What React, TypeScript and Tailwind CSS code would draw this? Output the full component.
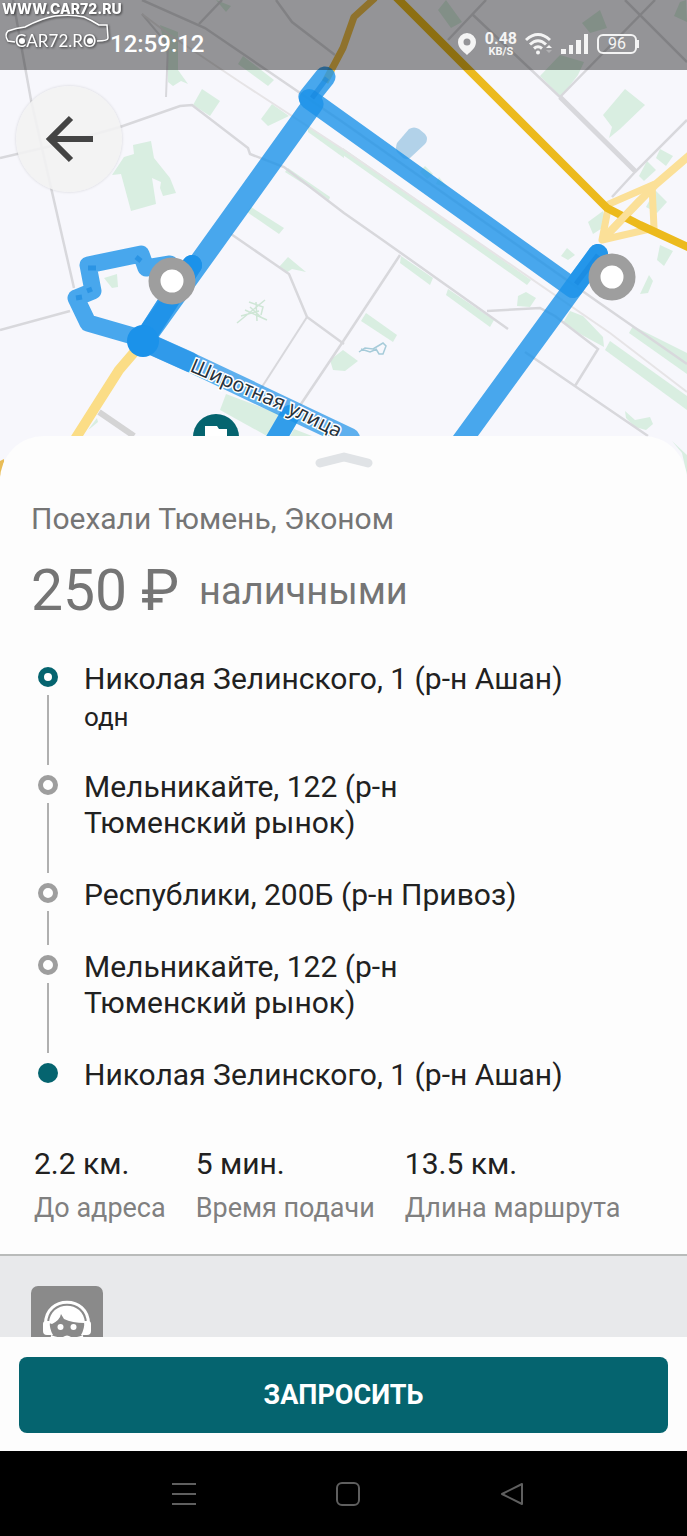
interface Stop {
  lines: string[];
  note?: string;
  kind: "start" | "middle" | "end";
}

const stops: Stop[] = [
  { lines: ["Николая Зелинского, 1 (р-н Ашан)"], note: "одн", kind: "start" },
  { lines: ["Мельникайте, 122 (р-н", "Тюменский рынок)"], kind: "middle" },
  { lines: ["Республики, 200Б (р-н Привоз)"], kind: "middle" },
  { lines: ["Мельникайте, 122 (р-н", "Тюменский рынок)"], kind: "middle" },
  { lines: ["Николая Зелинского, 1 (р-н Ашан)"], kind: "end" },
];

const stats = [
  { value: "2.2 км.", label: "До адреса" },
  { value: "5 мин.", label: "Время подачи" },
  { value: "13.5 км.", label: "Длина маршрута" },
];

const dotStyles = {
  start: "border-[6px] border-[#05646f] bg-white",
  middle: "border-[5px] border-[#9e9e9e] bg-white",
  end: "bg-[#05646f]",
};

function MapView() {
  return (
    <svg
      className="absolute inset-0 h-full w-full"
      viewBox="0 0 687 480"
      preserveAspectRatio="xMidYMin slice"
      aria-hidden="true"
    >
      <rect width="687" height="480" fill="#f7f7fc" />

      {/* parks */}
      <g fill="#d9eee1">
        <path d="M133 145L151 141L154 158L166 173L170 178L176 193L163 196L160 188L161 182L152 178L156 204L131 211L121 174L112 175L124 157L134 154Z" />
        <path d="M160 25L178 32L178 70L188 84L181 81L173 86L168 82L168 60Z" />
        <path d="M202 89L220 101L210 116L193 105Z" />
        <path d="M272 104L289 116L268 126L261 119Z" />
        <path d="M243 56L274 80L268 86L238 64Z" />
        <path d="M251 207L284 228L279 234L247 212Z" />
        <path d="M288 168L330 197L329 200L285 172Z" />
        <path d="M308 126L344 150L344 158L308 132Z" />
        <path d="M343 148L473 239L531 280L527 285L343 155Z" />
        <path d="M104 278L117 274L118 287L112 288Z" />
        <path d="M288 257L306 272L292 269L286 273L279 267Z" />
        <path d="M226 394L279 414L267 436L220 410Z" />
        <path d="M88 430L97 418L98 422L92 427Z" />
        <path d="M294 429L312 436L290 436Z" />
        <path d="M366 313L397 335L393 342L361 321Z" />
        <path d="M330 360L343 350L358 361L345 371L333 370Z" />
        <path d="M401 256L433 278L430 285L400 263Z" />
        <path d="M448 289L494 320L490 327L446 295Z" />
        <path d="M526 292L536 298L530 307L517 306L518 296Z" />
        <path d="M570 311L583 316L603 337L604 347L582 335L563 323Z" />
        <path d="M610 341L687 396L687 410L605 350Z" />
        <path d="M633 326L687 353L687 374L629 333Z" />
        <path d="M567 248L575 255L568 260L561 256Z" />
        <path d="M660 245L673 251L664 266L657 260Z" />
        <path d="M649 275L653 281L648 293L640 294Z" />
        <path d="M625 411L635 420L650 417L653 424L646 430L635 427L626 418Z" />
        <path d="M560 55L584 62L578 75L561 97L540 76Z" />
        <path d="M625 89L645 105L620 129L609 138L612 127L603 115Z" />
        <path d="M660 149L673 156L666 166L656 158Z" />
        <path d="M647 161L656 170L644 181L639 176Z" />
        <path d="M588 222L603 211L607 225L593 234Z" />
        <path d="M655 190L667 202L657 213L646 207Z" />
        <path d="M446 0L462 22L451 28L438 10Z" />
        <path d="M600 10L607 28L590 33L582 23Z" />
        <path d="M686 0L687 22L674 16L680 2Z" />
        <path d="M425 166L433 174L427 179L420 172Z" />
        <path d="M439 177L448 188L436 184Z" />
        <path d="M672 441L687 455L687 475L682 453Z" />
        <path d="M216 0L231 6L226 12Z" />
      </g>
      <path d="M397 143L409 129Q414 126 419 129L425 134Q429 139 425 144L410 158Q407 160 403 158L397 152Q395 148 397 143Z" fill="#b2d2e9" />
      <g fill="none" stroke="#cfe6d6" strokeWidth="1.5">
        <path d="M237 323L265 300M245 310L267 320M256 302L257 321M241 316L259 311M250 307L262 318M249 302L263 307L261 315" />
      </g>
      <path
        d="M359 352L365 348L373 349L378 346L383 343L386 346L383 354L379 354L376 349M361 349L370 352L377 349"
        fill="none"
        stroke="#a6cbd9"
        strokeWidth="1.5"
      />

      {/* minor streets */}
      <g fill="none" stroke="#d8d8dc" strokeWidth="2.5">
        <path d="M13 0L31 100L63 240L74 288" />
        <path d="M0 158L60 144L120 127L180 106L192 105L248 148L250 154L284 167L344 213L384 241L508 329" />
        <path d="M0 330L70 311" />
        <path d="M166 97L168 45L142 14" strokeWidth="2" />
        <path d="M142 0L205 28L344 123L598 302L687 364" />
        <path d="M142 14L170 35L240 82L344 150L610 333L687 392" stroke="#e6e4e6" strokeWidth="2" />
        <path d="M199 24L222 0M276 0L292 22L335 55" />
        <path d="M231 234L289 274L307 317L344 344" />
        <path d="M307 317L260 390" strokeWidth="2" />
        <path d="M400 255L344 340L297 410" />
        <path d="M487 311L540 308L555 316L598 349L575 386M525 352L648 436" />
        <path d="M486 0L448 40M472 14L560 97L635 171" />
        <path d="M560 97L655 0M625 0L687 62M687 120L635 172L612 197" />
        <path d="M99 412L134 436" stroke="#d4d4d5" strokeWidth="6" />
        <path d="M560 97L635 171" strokeWidth="5" />
      </g>

      {/* main roads */}
      <g fill="none" strokeLinejoin="round">
        <path d="M375 -2L354 17L343 48L325 82" stroke="#eebf4a" strokeWidth="7" />
        <path d="M143 342L119 370L91 414L72 444" stroke="#fbdd86" strokeWidth="10" />
        <g stroke="#fbe098">
          <path d="M690 155L655 185L602 240" strokeWidth="8" />
          <path d="M655 184L609 204L602 240L654 228L652 185" strokeWidth="7" />
        </g>
        <path d="M393 -6L607 208L640 225L690 248" stroke="#ecba1d" strokeWidth="8" />
        <path d="M640 200L602 240" stroke="#fbe098" strokeWidth="7" />
      </g>
      <path d="M0 461l4-2v8l-4 10z" fill="#e9bd58" />

      {/* ride route */}
      <g fill="none" stroke="#1c92e8" strokeWidth="20" strokeLinecap="round" strokeLinejoin="round">
        <path d="M325 77L309 97L313 104L143 341" strokeWidth="21" opacity="0.8" />
        <path d="M309 99L573 288L598 254" opacity="0.8" />
        <path d="M598 254L456 449" opacity="0.8" />
        <path
          d="M143 341L133 336L88 323L76 298L93 291L88 265L141 254L146 268L170 264"
          strokeWidth="17"
          opacity="0.8"
        />
        <path d="M192 265L143 341L194 364L350 438" opacity="0.7" />
        <path d="M190 362L143 341L192 265" opacity="0.7" />
        <path d="M290 415L272 446" opacity="0.9" />
      </g>
      <circle cx="143" cy="341" r="16" fill="#1b92ea" />
      <circle cx="192" cy="265" r="10" fill="#1b92ea" />
      <g fill="none" stroke="#1787dd" strokeWidth="5" opacity="0.6">
        <path d="M312 98L327 78M576 284L598 255" />
        <path d="M88 268h8M136 257l5 4M76 298l6-1M87 291l5-2" />
      </g>

      <path id="shirotnaya" d="M189 371L283 411L365 452" fill="none" />
      <text
        fill="#26323c"
        stroke="#ffffff"
        strokeWidth="3"
        paintOrder="stroke"
        className="font-['Noto_Sans',sans-serif] text-[20px]"
      >
        <textPath href="#shirotnaya">Широтная улица</textPath>
      </text>

      <circle cx="172" cy="281" r="17.5" fill="#fff" stroke="#9e9e9e" strokeWidth="12" />
      <circle cx="612" cy="277" r="17.5" fill="#fff" stroke="#9e9e9e" strokeWidth="12" />
      <circle cx="216" cy="437" r="23" fill="#05646f" />
      <path d="M205 426h12l2 3h8v16h-22z" fill="#fff" />
    </svg>
  );
}

function Watermark() {
  return (
    <svg className="absolute top-0 left-0 h-14 w-32" viewBox="0 0 128 56" role="img" aria-label="CAR72.RU">
      <g className="drop-shadow-[1px_1px_1px_rgba(0,0,0,0.6)]">
        <text x="2" y="14" fill="#fff" className="font-['Inter',sans-serif] text-[14px] leading-none font-extrabold">
          WWW.CAR72.RU
        </text>
        <path
          d="M15 42L8 41Q4 35 8 31Q16 28 25 27Q42 18 55 16Q72 14 84 17Q91 20 99 25L107 25L108 38Q108 41 97 41"
          fill="none"
          stroke="#fff"
          strokeWidth="1.5"
        />
        <text x="15" y="47" fill="#fff" className="font-['Lato',sans-serif] text-[17px]">
          CAR72.RO
        </text>
        <circle cx="22" cy="41" r="3" fill="#fff" />
        <circle cx="90" cy="41" r="3" fill="#fff" />
      </g>
    </svg>
  );
}

function StatusBar() {
  return (
    <div className="relative flex h-[70px] items-center justify-between bg-black/40 pt-[18px] pr-12 pl-[110px] text-[#f4f4f4]">
      <Watermark />
      <span className="text-2xl leading-6 font-medium text-white">12:59:12</span>
      <div className="flex items-center gap-2">
        <svg className="h-6 w-5" viewBox="0 0 20 24" fill="currentColor">
          <path fillRule="evenodd" d="M10 1a9 9 0 0 0-9 9c0 6 5 9 9 13c4-4 9-7 9-13a9 9 0 0 0-9-9zm0 5.5a3.500 3.500 0 1 1 0 7a3.500 3.500 0 0 1 0-7z" />
        </svg>
        <div className="flex flex-col items-center font-bold">
          <span className="text-base leading-[14px]">0.48</span>
          <span className="text-[11px] leading-[11px]">KB/S</span>
        </div>
        <svg className="h-6 w-7" viewBox="0 0 28 24" fill="none" stroke="currentColor" strokeWidth="3">
          <path d="M1 8Q13 -3 25 8M5 12.500Q13 5 21 12.500M9 16.500Q13 13 17 16.500" />
          <circle cx="13" cy="20.500" r="2" fill="currentColor" stroke="none" />
          <path d="M21 16l3-3 3 3z" fill="currentColor" stroke="none" />
          <path d="M21 18h6l-3 3z" fill="currentColor" stroke="none" opacity="0.3" />
        </svg>
        <svg className="h-5 w-7" viewBox="0 0 28 20" fill="currentColor">
          <path d="M0 15h5v5H0zM8 11h4v9H8zM15 6h5v14h-5zM23 0h4v20h-4z" />
        </svg>
        <div className="flex items-center">
          <span className="flex h-5 w-10 items-center justify-center rounded-md border-2 border-current text-base leading-none">
            96
          </span>
          <span className="h-2 w-0.5 bg-current" />
        </div>
      </div>
    </div>
  );
}

function RouteStop({ stop }: { stop: Stop }) {
  return (
    <li className="flex gap-[26px]">
      <div className="flex w-5 flex-col items-center pt-1.5">
        <span className={`h-5 w-5 shrink-0 rounded-full ${dotStyles[stop.kind]}`} />
        {stop.kind !== "end" && <span className="mt-2 mb-1 w-0.5 flex-1 bg-[#b0b0b0]" />}
      </div>
      <div className={stop.kind === "end" ? "" : "pb-9"}>
        {stop.lines.map((line) => (
          <p key={line} className="text-3xl leading-9">
            {line}
          </p>
        ))}
        {stop.note && <p className="pt-1 text-[26px] leading-8">{stop.note}</p>}
      </div>
    </li>
  );
}

function OperatorIcon() {
  return (
    <svg className="h-18 w-18" viewBox="0 0 72 72">
      <rect width="72" height="72" rx="7" fill="#8a8a8a" />
      <path d="M14.500 38C14.500 9 57.500 9 57.500 38" fill="none" stroke="#fff" strokeWidth="3" />
      <path d="M18 37C19 14 53 14 54 37Q41 37 33 33L30 28Q29 34 21 38Z" fill="#fff" />
      <path d="M12 38q0-3 3-3h4q-1 7 3 14h-6q-4 0-4-4zM60 38q0-3-3-3h-4q1 7-3 14h6q4 0 4-4z" fill="#fff" />
      <circle cx="29.500" cy="41" r="3" fill="#fff" />
      <circle cx="42.500" cy="41" r="3" fill="#fff" />
      <path d="M20 49Q27 52 32 51Q36 48 40 51Q46 52 52 49L54 72H18Z" fill="#fff" />
    </svg>
  );
}

export default function App() {
  return (
    <div className="flex min-h-screen flex-col bg-[#fdfdfd] font-['Roboto',sans-serif] text-[#212121]">
      <header className="relative h-[480px] shrink-0 overflow-hidden">
        <MapView />
        <StatusBar />
        <button
          type="button"
          aria-label="Назад"
          className="relative mt-4 ml-4 flex h-[106px] w-[106px] items-center justify-center rounded-full bg-[#f2f2f2]/90 shadow-[0_0_3px_rgba(0,0,0,0.15)]"
        >
          <svg className="h-12 w-12" viewBox="0 0 48 48" fill="none" stroke="#444" strokeWidth="6">
            <path d="M48 24H4M26 3L5 24L26 45" />
          </svg>
        </button>
      </header>

      <main className="relative -mt-11 flex flex-1 flex-col rounded-t-[44px] bg-[#fdfdfd]">
        <svg className="mt-4 h-4 w-[58px] self-center" viewBox="0 0 58 16" fill="none">
          <path d="M5 11L29 5L53 11" stroke="#e0e3e6" strokeWidth="9" strokeLinecap="round" strokeLinejoin="round" />
        </svg>

        <section className="px-[31px] pt-[33px] text-[#757575]">
          <h1 className="text-3xl leading-9">Поехали Тюмень, Эконом</h1>
          <p className="flex items-center gap-5 pt-[22px]">
            <span className="text-[57px] leading-16">250 ₽</span>
            <span className="text-[38px] leading-16">наличными</span>
          </p>
        </section>

        <ul className="pt-[38px] pl-[38px]">
          {stops.map((stop, i) => (
            <RouteStop key={i} stop={stop} />
          ))}
        </ul>

        <dl className="flex gap-[30px] px-[34px] pt-[53px] pb-7">
          {stats.map((s) => (
            <div key={s.label} className="flex flex-col-reverse gap-2">
              <dt className="text-[27px] leading-9 text-[#808080]">{s.label}</dt>
              <dd className="text-3xl leading-9">{s.value}</dd>
            </div>
          ))}
        </dl>

        <div className="h-[83px] overflow-hidden border-t-2 border-[#b9bbba] bg-[#e8e9eb] px-[31px] pt-[30px]">
          <OperatorIcon />
        </div>

        <div className="px-[19px] pt-5 pb-[18px]">
          <button
            type="button"
            className="h-[76px] w-full rounded-lg bg-[#05646f] text-[27px] font-bold text-white"
          >
            ЗАПРОСИТЬ
          </button>
        </div>
      </main>

      <nav className="flex h-[85px] shrink-0 items-center justify-center gap-[140px] bg-black pl-2 text-[#5f5f5f]">
        <button type="button" aria-label="Меню">
          <svg className="h-6 w-6" viewBox="0 0 24 24" fill="none" stroke="currentColor" strokeWidth="2">
            <path d="M0 2h24M0 12h24M0 22h24" />
          </svg>
        </button>
        <button type="button" aria-label="Домой">
          <svg className="h-6 w-6" viewBox="0 0 24 24" fill="none" stroke="currentColor" strokeWidth="2">
            <rect x="1" y="1" width="22" height="22" rx="5" />
          </svg>
        </button>
        <button type="button" aria-label="Назад в системе">
          <svg className="h-6 w-6" viewBox="0 0 24 24" fill="none" stroke="currentColor" strokeWidth="2">
            <path d="M22 2v20L2 12z" strokeLinejoin="round" />
          </svg>
        </button>
      </nav>
    </div>
  );
}
